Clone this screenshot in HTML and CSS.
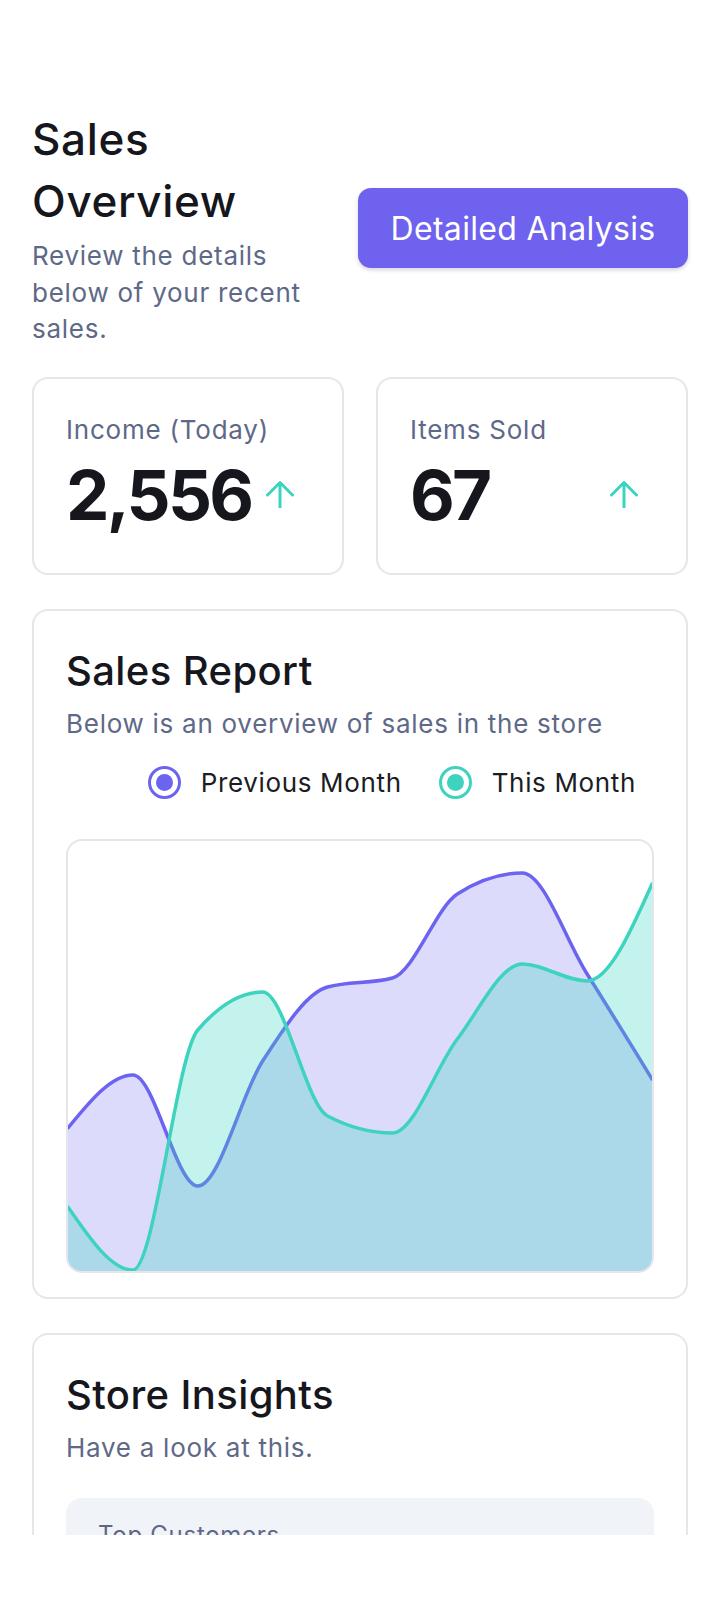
FILE: index.html
```html
<!DOCTYPE html>
<html lang="en">
<head>
<meta charset="utf-8">
<title>Sales Overview</title>
<link rel="stylesheet" href="styles.css">
</head>
<body>
<div class="viewport">
  <main class="page">
    <header class="head">
      <div class="head-text">
        <h1 class="title">Sales Overview</h1>
        <p class="muted head-sub">Review the details below of your recent sales.</p>
      </div>
      <button class="btn" type="button">Detailed Analysis</button>
    </header>

    <section class="stats">
      <div class="card stat">
        <p class="stat-label">Income (Today)</p>
        <div class="stat-row">
          <span class="stat-value">2,556</span>
          <svg class="up" viewBox="0 0 28 28" width="28" height="28" aria-hidden="true"><path d="M14 2.5V27.5M1.5 15L14 2.5L26.5 15" fill="none" stroke="currentColor" stroke-width="3" stroke-linecap="round" stroke-linejoin="round"/></svg>
        </div>
      </div>
      <div class="card stat">
        <p class="stat-label">Items Sold</p>
        <div class="stat-row">
          <span class="stat-value">67</span>
          <svg class="up" viewBox="0 0 28 28" width="28" height="28" aria-hidden="true"><path d="M14 2.5V27.5M1.5 15L14 2.5L26.5 15" fill="none" stroke="currentColor" stroke-width="3" stroke-linecap="round" stroke-linejoin="round"/></svg>
        </div>
      </div>
    </section>

    <section class="card panel report">
      <h2 class="panel-title">Sales Report</h2>
      <p class="muted panel-sub">Below is an overview of sales in the store</p>
      <div class="legend">
        <span class="legend-item"><span class="dot dot-prev"></span>Previous Month</span>
        <span class="legend-item"><span class="dot dot-this"></span>This Month</span>
      </div>
      <div class="chart">
        <svg id="chart" viewBox="0 0 586 430" preserveAspectRatio="none" aria-hidden="true">
          <path id="prev-area" class="area-prev" d=""/>
          <path id="prev-line" class="line-prev" d=""/>
          <path id="this-area" class="area-this" d=""/>
          <path id="this-line" class="line-this" d=""/>
        </svg>
      </div>
    </section>

    <section class="card panel insights">
      <h2 class="panel-title">Store Insights</h2>
      <p class="muted panel-sub">Have a look at this.</p>
      <div class="insight-box">
        <p class="insight-label">Top Customers</p>
      </div>
    </section>
  </main>
</div>
<script src="script.js"></script>
</body>
</html>
```

FILE: styles.css
```css
* { box-sizing: border-box; }

html, body {
  margin: 0;
  padding: 0;
  background: #ffffff;
}

body {
  font-family: "Inter", "Open Sans", sans-serif;
  color: #16161d;
}

.viewport {
  height: 1535px;
  overflow: hidden;
}

.page {
  padding: 109px 32px 40px;
  display: flex;
  flex-direction: column;
}

/* Header */
.head {
  display: flex;
  align-items: center;
  gap: 24px;
}

.head-text {
  flex: 1;
  min-width: 0;
}

.title {
  margin: 0;
  font-size: 44px;
  line-height: 1.4;
  font-weight: 500;
  letter-spacing: 0.015em;
  color: #16161d;
}

.muted {
  margin: 0;
  color: #5e6987;
  font-size: 26px;
  line-height: 1.4;
  letter-spacing: 0.028em;
}

.head-sub {
  margin-top: 6px;
}

.btn {
  flex: 0 0 330px;
  height: 80px;
  border: 0;
  border-radius: 13px;
  background: #6e62ee;
  color: #ffffff;
  font-family: "Inter", sans-serif;
  font-size: 32px;
  font-weight: 400;
  letter-spacing: 0.01em;
  box-shadow: 0 2px 4px rgba(30, 30, 60, 0.18);
  padding: 0;
}

/* Cards */
.card {
  border: 2px solid #e5e6eb;
  border-radius: 16px;
  background: #ffffff;
}

.stats {
  margin-top: 30px;
  display: grid;
  grid-template-columns: 1fr 1fr;
  gap: 32px;
}

.stat {
  padding: 33px 32px 35px;
}

.stat-label {
  margin: 0;
  font-size: 26px;
  line-height: 1.4;
  color: #5e6987;
  letter-spacing: 0.03em;
}

.stat-row {
  margin-top: 4px;
  display: flex;
  align-items: center;
  justify-content: space-between;
}

.stat-value {
  font-size: 69px;
  line-height: 1.24;
  font-weight: 700;
  letter-spacing: -0.04em;
  color: #16161d;
}

.up {
  color: #3dd3bf;
  margin-right: 16px;
  margin-top: -4px;
  display: block;
}

/* Panels */
.panel {
  margin-top: 34px;
  padding: 32px 32px 24px;
}

.panel-title {
  margin: 0;
  font-size: 40px;
  line-height: 1.4;
  font-weight: 500;
  letter-spacing: 0.01em;
  color: #16161d;
}

.panel-sub {
  margin-top: 7px;
}

.legend {
  margin-top: 22px;
  height: 36px;
  display: flex;
  justify-content: flex-end;
  align-items: center;
  gap: 37px;
  padding-right: 18px;
}

.legend-item {
  display: flex;
  align-items: center;
  gap: 20px;
  font-size: 26px;
  letter-spacing: 0.025em;
  color: #1c1c24;
}

.dot {
  width: 33px;
  height: 33px;
  border-radius: 50%;
  border: 3.5px solid currentColor;
  background: #ffffff;
  display: grid;
  place-items: center;
}

.dot::after {
  content: "";
  width: 17px;
  height: 17px;
  border-radius: 50%;
  background: currentColor;
}

.dot-prev { color: #6c63f0; }
.dot-this { color: #3dd3bf; }

.chart {
  margin-top: 38px;
  height: 434px;
  border: 2px solid #e5e6eb;
  border-radius: 16px;
  overflow: hidden;
}

.chart svg {
  display: block;
  width: 100%;
  height: 100%;
}

.area-prev { fill: rgba(108, 99, 240, 0.23); stroke: none; }
.area-this { fill: rgba(61, 211, 191, 0.3); stroke: none; }
.line-prev, .line-this {
  fill: none;
  stroke-width: 3.5;
  stroke-linejoin: round;
  stroke-linecap: round;
}
.line-prev { stroke: #6c63f0; }
.line-this { stroke: #3dd3bf; }

.insights {
  padding-bottom: 32px;
}

.insight-box {
  margin-top: 32px;
  background: #f0f3f8;
  border-radius: 16px;
  padding: 20px 32px 60px;
}

.insight-label {
  margin: 0;
  font-size: 24px;
  line-height: 1.4;
  color: #5e6987;
  letter-spacing: 0.03em;
}
```

FILE: script.js
```js
(function () {
  var W = 586, H = 430;
  var prev = [287, 234, 345, 220, 146, 137, 53, 32, 133, 238];
  var cur = [366, 429, 189, 151, 275, 292, 198, 123, 140, 43];

  function sign(x) { return x < 0 ? -1 : 1; }

  function pts(ys) {
    var n = ys.length, step = W / (n - 1);
    return ys.map(function (y, i) { return [i * step, y]; });
  }

  function monotonePath(p) {
    var n = p.length, m = new Array(n), i;
    for (i = 1; i < n - 1; i++) {
      var h0 = p[i][0] - p[i - 1][0], h1 = p[i + 1][0] - p[i][0];
      var s0 = (p[i][1] - p[i - 1][1]) / h0, s1 = (p[i + 1][1] - p[i][1]) / h1;
      var q = (s0 * h1 + s1 * h0) / (h0 + h1);
      m[i] = (sign(s0) + sign(s1)) * Math.min(Math.abs(s0), Math.abs(s1), 0.5 * Math.abs(q)) || 0;
    }
    var sa = (p[1][1] - p[0][1]) / (p[1][0] - p[0][0]);
    m[0] = (3 * sa - m[1]) / 2;
    var sb = (p[n - 1][1] - p[n - 2][1]) / (p[n - 1][0] - p[n - 2][0]);
    m[n - 1] = (3 * sb - m[n - 2]) / 2;
    var d = "M" + p[0][0].toFixed(2) + "," + p[0][1].toFixed(2);
    for (i = 0; i < n - 1; i++) {
      var dx = (p[i + 1][0] - p[i][0]) / 3;
      d += "C" + (p[i][0] + dx).toFixed(2) + "," + (p[i][1] + dx * m[i]).toFixed(2) +
        " " + (p[i + 1][0] - dx).toFixed(2) + "," + (p[i + 1][1] - dx * m[i + 1]).toFixed(2) +
        " " + p[i + 1][0].toFixed(2) + "," + p[i + 1][1].toFixed(2);
    }
    return d;
  }

  function draw(ys, lineId, areaId) {
    var p = pts(ys);
    var line = monotonePath(p);
    document.getElementById(lineId).setAttribute("d", line);
    document.getElementById(areaId).setAttribute("d",
      line + "L" + W + "," + (H + 4) + "L0," + (H + 4) + "Z");
  }

  draw(prev, "prev-line", "prev-area");
  draw(cur, "this-line", "this-area");
})();
```
